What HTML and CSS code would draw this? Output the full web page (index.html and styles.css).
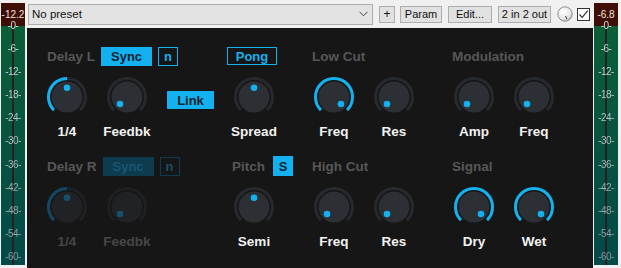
FILE: index.html
```html
<!DOCTYPE html>
<html lang="en">
<head>
    <meta charset="UTF-8">
    <title>Delay</title>
    <link rel="stylesheet" href="styles.css">
</head>
<body>
<div class="host">
    <!--左侧电平表-->
    <div class="meter meter-l">
        <div class="peak">-12.2</div>
        <div class="scale">
            <ul class="ticks">
                <li>-0-</li><li>-6-</li><li>-12-</li><li>-18-</li><li>-24-</li><li>-30-</li>
                <li>-36-</li><li>-42-</li><li>-48-</li><li>-54-</li><li>-60-</li>
            </ul>
        </div>
    </div>

    <div class="main">
        <!--工具栏-->
        <div class="toolbar">
            <div class="preset">
                <span>No preset</span>
                <svg class="chev" width="9" height="6" viewBox="0 0 9 6"><path d="M0.5 0.8 L4.5 4.8 L8.5 0.8" fill="none" stroke="#444" stroke-width="1"/></svg>
            </div>
            <span class="tb-btn tb-plus">+</span>
            <span class="tb-btn tb-param">Param</span>
            <span class="tb-btn tb-edit">Edit...</span>
            <span class="tb-btn tb-io">2 in 2 out</span>
            <svg class="mini-knob" width="16" height="16" viewBox="0 0 16 16">
                <defs>
                    <radialGradient id="mk" cx="0.4" cy="0.35" r="0.7">
                        <stop offset="0" stop-color="#ffffff"/>
                        <stop offset="0.7" stop-color="#e6e6e6"/>
                        <stop offset="1" stop-color="#a8a8a8"/>
                    </radialGradient>
                </defs>
                <circle cx="8" cy="8" r="7.2" fill="url(#mk)" stroke="#7a7a7a" stroke-width="0.8"/>
                <path d="M8.6 10 L9.8 13" stroke="#333" stroke-width="1"/>
            </svg>
            <span class="check">
                <svg width="11" height="11" viewBox="0 0 11 11"><path d="M1.5 5.5 L4.2 8.4 L9.8 1.6" fill="none" stroke="#333" stroke-width="1.2"/></svg>
            </span>
        </div>

        <!--插件面板-->
        <div class="panel">
            <!--第一行-->
            <div class="sec sec-a">
                <div class="sec-head">
                    <span class="title">Delay L</span>
                    <span class="btn btn-on b-sync">Sync</span>
                    <span class="btn btn-off b-n">n</span>
                </div>
                <div class="ctls">
                    <div class="ctl">
                        <svg class="knob" viewBox="0 0 40 40"><path class="track" d="M6.92 33.08A18.5 18.5 0 1 1 33.08 33.08"/><path class="arc" d="M6.92 33.08A18.5 18.5 0 0 1 20 1.5"/><circle class="body" cx="20" cy="20" r="15.5"/><circle class="dot" cx="20" cy="10.8" r="3.3"/></svg>
                        <span class="lbl">1/4</span>
                    </div>
                    <div class="ctl">
                        <svg class="knob" viewBox="0 0 40 40"><path class="track" d="M6.92 33.08A18.5 18.5 0 1 1 33.08 33.08"/><circle class="body" cx="20" cy="20" r="15.5"/><circle class="dot" cx="13" cy="27" r="3.3"/></svg>
                        <span class="lbl">Feedbk</span>
                    </div>
                    <div class="link-cell">
                        <span class="btn btn-on b-link">Link</span>
                    </div>
                </div>
            </div>
            <div class="sec sec-b">
                <div class="sec-head">
                    <span class="btn btn-off b-pong">Pong</span>
                </div>
                <div class="ctls">
                    <div class="ctl">
                        <svg class="knob" viewBox="0 0 40 40"><path class="track" d="M6.92 33.08A18.5 18.5 0 1 1 33.08 33.08"/><circle class="body" cx="20" cy="20" r="15.5"/><circle class="dot" cx="20" cy="10.8" r="3.3"/></svg>
                        <span class="lbl">Spread</span>
                    </div>
                </div>
            </div>
            <div class="sec sec-c">
                <div class="sec-head">
                    <span class="title">Low Cut</span>
                </div>
                <div class="ctls">
                    <div class="ctl">
                        <svg class="knob" viewBox="0 0 40 40"><path class="track" d="M6.92 33.08A18.5 18.5 0 1 1 33.08 33.08"/><path class="arc" d="M6.92 33.08A18.5 18.5 0 1 1 33.08 33.08"/><circle class="body" cx="20" cy="20" r="15.5"/><circle class="dot" cx="27" cy="27" r="3.3"/></svg>
                        <span class="lbl">Freq</span>
                    </div>
                    <div class="ctl">
                        <svg class="knob" viewBox="0 0 40 40"><path class="track" d="M6.92 33.08A18.5 18.5 0 1 1 33.08 33.08"/><circle class="body" cx="20" cy="20" r="15.5"/><circle class="dot" cx="13" cy="27" r="3.3"/></svg>
                        <span class="lbl">Res</span>
                    </div>
                </div>
            </div>
            <div class="sec sec-d">
                <div class="sec-head">
                    <span class="title">Modulation</span>
                </div>
                <div class="ctls">
                    <div class="ctl">
                        <svg class="knob" viewBox="0 0 40 40"><path class="track" d="M6.92 33.08A18.5 18.5 0 1 1 33.08 33.08"/><circle class="body" cx="20" cy="20" r="15.5"/><circle class="dot" cx="13" cy="27" r="3.3"/></svg>
                        <span class="lbl">Amp</span>
                    </div>
                    <div class="ctl">
                        <svg class="knob" viewBox="0 0 40 40"><path class="track" d="M6.92 33.08A18.5 18.5 0 1 1 33.08 33.08"/><circle class="body" cx="20" cy="20" r="15.5"/><circle class="dot" cx="13" cy="27" r="3.3"/></svg>
                        <span class="lbl">Freq</span>
                    </div>
                </div>
            </div>

            <!--第二行-->
            <div class="sec sec-a">
                <div class="sec-head">
                    <span class="title">Delay R</span>
                    <span class="btn btn-dim-on b-sync">Sync</span>
                    <span class="btn btn-dim-off b-n">n</span>
                </div>
                <div class="ctls">
                    <div class="ctl dim">
                        <svg class="knob" viewBox="0 0 40 40"><path class="track" d="M6.92 33.08A18.5 18.5 0 1 1 33.08 33.08"/><path class="arc" d="M6.92 33.08A18.5 18.5 0 0 1 20 1.5"/><circle class="body" cx="20" cy="20" r="15.5"/><circle class="dot" cx="20" cy="10.8" r="3.3"/></svg>
                        <span class="lbl">1/4</span>
                    </div>
                    <div class="ctl dim">
                        <svg class="knob" viewBox="0 0 40 40"><path class="track" d="M6.92 33.08A18.5 18.5 0 1 1 33.08 33.08"/><circle class="body" cx="20" cy="20" r="15.5"/><circle class="dot" cx="13" cy="27" r="3.3"/></svg>
                        <span class="lbl">Feedbk</span>
                    </div>
                </div>
            </div>
            <div class="sec sec-b">
                <div class="sec-head pitch-head">
                    <span class="title">Pitch</span>
                    <span class="btn btn-on b-s">S</span>
                </div>
                <div class="ctls">
                    <div class="ctl">
                        <svg class="knob" viewBox="0 0 40 40"><path class="track" d="M6.92 33.08A18.5 18.5 0 1 1 33.08 33.08"/><circle class="body" cx="20" cy="20" r="15.5"/><circle class="dot" cx="20" cy="10.8" r="3.3"/></svg>
                        <span class="lbl">Semi</span>
                    </div>
                </div>
            </div>
            <div class="sec sec-c">
                <div class="sec-head">
                    <span class="title">High Cut</span>
                </div>
                <div class="ctls">
                    <div class="ctl">
                        <svg class="knob" viewBox="0 0 40 40"><path class="track" d="M6.92 33.08A18.5 18.5 0 1 1 33.08 33.08"/><circle class="body" cx="20" cy="20" r="15.5"/><circle class="dot" cx="13" cy="27" r="3.3"/></svg>
                        <span class="lbl">Freq</span>
                    </div>
                    <div class="ctl">
                        <svg class="knob" viewBox="0 0 40 40"><path class="track" d="M6.92 33.08A18.5 18.5 0 1 1 33.08 33.08"/><circle class="body" cx="20" cy="20" r="15.5"/><circle class="dot" cx="13" cy="27" r="3.3"/></svg>
                        <span class="lbl">Res</span>
                    </div>
                </div>
            </div>
            <div class="sec sec-d">
                <div class="sec-head">
                    <span class="title">Signal</span>
                </div>
                <div class="ctls">
                    <div class="ctl">
                        <svg class="knob" viewBox="0 0 40 40"><path class="track" d="M6.92 33.08A18.5 18.5 0 1 1 33.08 33.08"/><path class="arc" d="M6.92 33.08A18.5 18.5 0 1 1 33.08 33.08"/><circle class="body" cx="20" cy="20" r="15.5"/><circle class="dot" cx="27" cy="27" r="3.3"/></svg>
                        <span class="lbl">Dry</span>
                    </div>
                    <div class="ctl">
                        <svg class="knob" viewBox="0 0 40 40"><path class="track" d="M6.92 33.08A18.5 18.5 0 1 1 33.08 33.08"/><path class="arc" d="M6.92 33.08A18.5 18.5 0 1 1 33.08 33.08"/><circle class="body" cx="20" cy="20" r="15.5"/><circle class="dot" cx="27" cy="27" r="3.3"/></svg>
                        <span class="lbl">Wet</span>
                    </div>
                </div>
            </div>
        </div>
    </div>

    <!--右侧电平表-->
    <div class="meter meter-r">
        <div class="peak">-6.8</div>
        <div class="scale">
            <ul class="ticks">
                <li>-0-</li><li>-6-</li><li>-12-</li><li>-18-</li><li>-24-</li><li>-30-</li>
                <li>-36-</li><li>-42-</li><li>-48-</li><li>-54-</li><li>-60-</li>
            </ul>
        </div>
    </div>
</div>
</body>
</html>
```

FILE: styles.css
```css
* {
    padding: 0;
    margin: 0;
    list-style: none;
    box-sizing: border-box;
}

body {
    width: 621px;
    height: 268px;
    overflow: hidden;
    background: #f0f0f0;
    font-family: "Liberation Sans", Arial, sans-serif;
}

.host {
    display: flex;
    height: 268px;
}

/* 电平表 */
.meter {
    width: 24px;
    height: 262px;
    margin-top: 3px;
    display: flex;
    flex-direction: column;
}

.meter-l {
    margin-left: 1px;
    margin-right: 2px;
}

.meter-r {
    margin-left: 1px;
}

.peak {
    height: 23px;
    line-height: 23px;
    background: #3f0e05;
    color: #f1e4de;
    font-size: 10px;
    text-align: center;
}

.scale {
    flex: 1;
    position: relative;
    background: linear-gradient(#0b5e37, #03494a);
}

.scale::before {
    content: "";
    position: absolute;
    left: 11px;
    top: 0;
    bottom: 0;
    width: 2px;
    background: #2a1f1f;
}

.ticks {
    position: relative;
    margin-top: -6px;
    display: flex;
    flex-direction: column;
    gap: 11.1px;
    font-size: 10px;
    line-height: 12px;
    letter-spacing: -0.6px;
    text-align: center;
    background: linear-gradient(#dcecf4, #8c9696);
    -webkit-background-clip: text;
    background-clip: text;
    color: transparent;
}

/* 主体 */
.main {
    width: 566px;
    display: flex;
    flex-direction: column;
}

.toolbar {
    height: 28px;
    display: flex;
    align-items: center;
    font-size: 11px;
    color: #111;
}

.preset {
    width: 345px;
    height: 21px;
    margin-left: 1px;
    margin-right: 6px;
    border: 1px solid #adadad;
    background: #e3e3e3;
    display: flex;
    align-items: center;
    justify-content: space-between;
    padding: 0 4px 0 3px;
    font-size: 11.5px;
}

.chev {
    display: block;
}

.tb-btn {
    height: 17px;
    border: 1px solid #adadad;
    background: #e1e1e1;
    display: flex;
    align-items: center;
    justify-content: center;
    margin-right: 6px;
}

.tb-plus {
    width: 16px;
    margin-right: 5px;
    font-size: 12px;
}

.tb-param {
    width: 42px;
}

.tb-edit {
    width: 44px;
}

.tb-io {
    width: 53px;
}

.mini-knob {
    display: block;
    margin-right: 4px;
}

.check {
    width: 13px;
    height: 13px;
    border: 1px solid #333;
    background: #fff;
    display: flex;
    align-items: center;
    justify-content: center;
}

/* 插件面板 */
.panel {
    flex: 1;
    background: #161616;
    display: grid;
    grid-template-columns: 187px 80px 140px 120px;
    grid-template-rows: 94px 94px;
    row-gap: 16px;
    align-content: start;
    padding: 18px 0 0 10px;
}

.sec {
    display: flex;
    flex-direction: column;
}

.sec-head {
    height: 20px;
    display: flex;
    align-items: center;
    gap: 6px;
}

.sec-a .sec-head {
    padding-left: 10px;
}

.sec-b .sec-head {
    padding-left: 3px;
}

.sec-b .pitch-head {
    padding-left: 8px;
    gap: 8px;
}

.sec-c .sec-head,
.sec-d .sec-head {
    padding-left: 8px;
}

.title {
    font-weight: bold;
    font-size: 13.5px;
    color: #575757;
}

.btn {
    height: 19px;
    display: flex;
    align-items: center;
    justify-content: center;
    font-weight: bold;
    font-size: 13px;
}

.btn-on {
    background: #13b1ef;
    color: #0f2231;
}

.btn-off {
    border: 1px solid #13b1ef;
    color: #13b1ef;
}

.btn-dim-on {
    background: #0f3b4f;
    color: #1a5675;
}

.btn-dim-off {
    border: 1px solid #0f3b4f;
    color: #1b4d66;
}

.b-sync {
    width: 51px;
}

.b-n {
    width: 20px;
}

.b-pong {
    width: 50px;
    height: 18px;
}

.b-link {
    width: 47px;
    height: 18px;
}

.b-s {
    width: 20px;
    height: 20px;
}

.ctls {
    display: flex;
    margin-top: 11px;
}

.ctl {
    width: 60px;
    display: flex;
    flex-direction: column;
    align-items: center;
}

.link-cell {
    width: 67px;
    display: flex;
    justify-content: center;
    align-items: flex-start;
    padding-top: 14px;
}

.knob {
    display: block;
    width: 40px;
    height: 40px;
}

.knob .track {
    fill: none;
    stroke: #26292d;
    stroke-width: 3;
}

.knob .arc {
    fill: none;
    stroke: #13b1ef;
    stroke-width: 3;
}

.knob .body {
    fill: #2c2f34;
}

.knob .dot {
    fill: #13b1ef;
}

.lbl {
    margin-top: 7px;
    height: 16px;
    line-height: 16px;
    font-weight: bold;
    font-size: 13.5px;
    color: #f2f2f2;
}

.dim .track {
    stroke: #1e2023;
}

.dim .arc {
    stroke: #134660;
}

.dim .body {
    fill: #202226;
}

.dim .dot {
    fill: #17506d;
}

.dim .lbl {
    color: #464646;
}
```
